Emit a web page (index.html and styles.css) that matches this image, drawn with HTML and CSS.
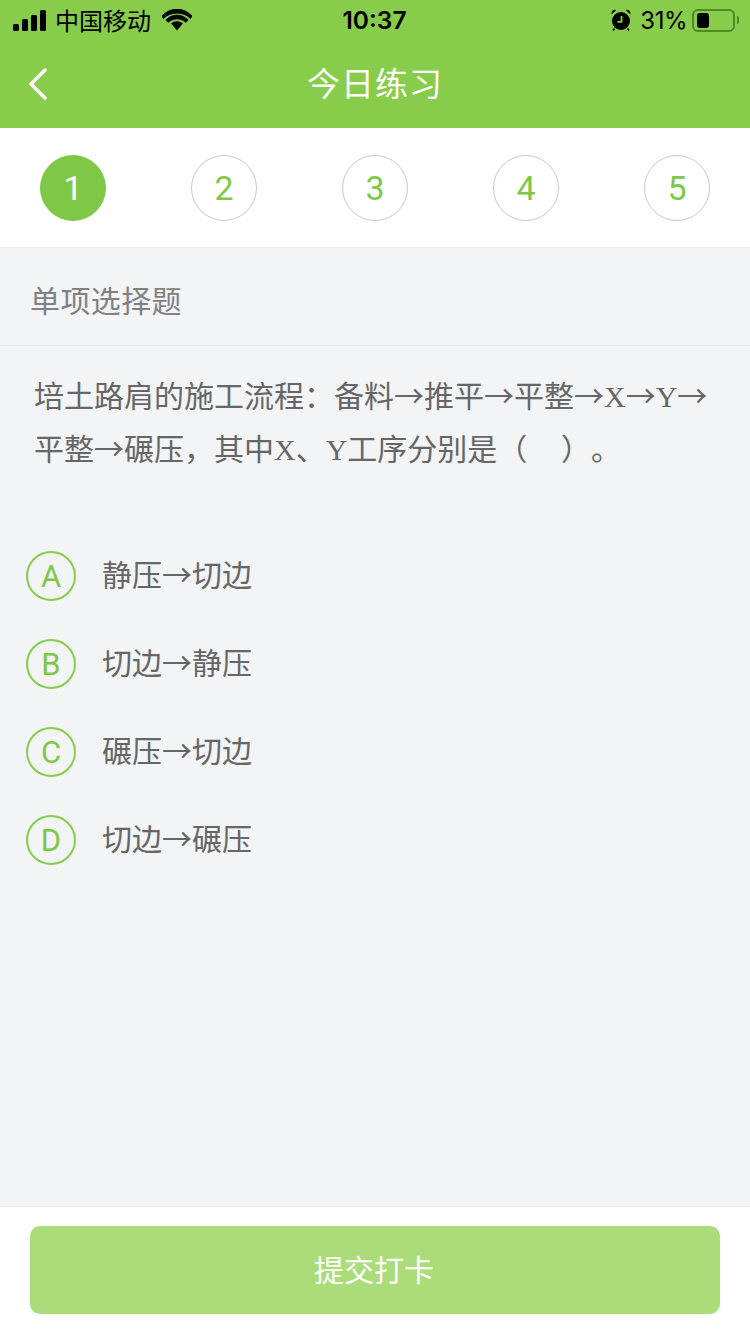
FILE: index.html
```html
<!DOCTYPE html>
<html lang="zh-CN">
<head>
  <meta charset="UTF-8">
  <meta name="viewport" content="width=device-width, initial-scale=1.0">
  <title>今日练习</title>
  <link rel="stylesheet" href="styles.css">
</head>
<body>
  <div class="page">
    <header class="header">
      <!-- Status bar -->
      <div class="status">
        <div class="status-left">
          <svg class="signal" width="34" height="21" viewBox="0 0 34 21">
            <rect x="0" y="14" width="6" height="7" rx="1.5"/>
            <rect x="9" y="9" width="6" height="12" rx="1.5"/>
            <rect x="18" y="5" width="6" height="16" rx="1.5"/>
            <rect x="27" y="0" width="6" height="21" rx="1.5"/>
          </svg>
          <span class="carrier">中国移动</span>
          <svg class="wifi" width="30" height="22" viewBox="0 0 30 22">
            <path d="M15 4c-5.300 0-10 2-13.500 5.400L0 7C4 2.900 9.300.2 15 .2S26 2.900 30 7l-1.500 2.400C25 6 20.300 4 15 4z" stroke="#000" stroke-width="1"/>
            <path d="M15 10c-3.400 0-6.500 1.300-8.900 3.500L3.800 10.800C7 7.900 10.800 6 15 6s8 1.900 11.200 4.800L23.900 13.500C21.500 11.300 18.400 10 15 10z" stroke="#000" stroke-width=".6"/>
            <path d="M15 12.300c-2.300 0-4.300.8-5.900 2.200l5.900 7 5.900-7c-1.600-1.400-3.600-2.200-5.900-2.200z"/>
          </svg>
        </div>
        <div class="time">10:37</div>
        <div class="status-right">
          <svg class="alarm" width="20" height="22" viewBox="0 0 20 22">
            <circle cx="10" cy="12" r="9"/>
            <path d="M.5 5.500 5 1.200C3 0 .3 2 .5 5.500zM19.500 5.500 15 1.200C17 0 19.700 2 19.500 5.500z"/>
            <path d="M3.500 19.500 2 21.500M16.500 19.500l1.500 2" stroke="#000" stroke-width="1.500"/>
            <path d="M10.500 7v5.800H6.500" fill="none" stroke="#88cc4b" stroke-width="1.800"/>
          </svg>
          <span class="percent">31%</span>
          <div class="battery"><div class="battery-level"></div></div>
          <div class="battery-tip"></div>
        </div>
      </div>
      <!-- Nav bar -->
      <nav class="nav">
        <svg class="back" width="20" height="32" viewBox="0 0 20 32">
          <path d="M17 2 3 16l14 14" fill="none" stroke="#fff" stroke-width="3.400" stroke-linecap="round" stroke-linejoin="round"/>
        </svg>
        <h1 class="title">今日练习</h1>
      </nav>
    </header>

    <div class="steps">
      <div class="step active">1</div>
      <div class="step">2</div>
      <div class="step">3</div>
      <div class="step">4</div>
      <div class="step">5</div>
    </div>

    <div class="kind">单项选择题</div>

    <main class="content">
      <p class="question">培土路肩的施工流程：备料→推平→平整→<span class="latin">X</span>→<span class="latin">Y</span>→平整→碾压，其中<span class="latin">X</span>、<span class="latin">Y</span>工序分别是（&nbsp;&nbsp;&nbsp;&nbsp;&nbsp;）。</p>
      <ul class="options">
        <li class="option"><span class="letter">A</span><span class="option-text">静压→切边</span></li>
        <li class="option"><span class="letter">B</span><span class="option-text">切边→静压</span></li>
        <li class="option"><span class="letter">C</span><span class="option-text">碾压→切边</span></li>
        <li class="option"><span class="letter">D</span><span class="option-text">切边→碾压</span></li>
      </ul>
    </main>

    <footer class="footer">
      <button class="submit">提交打卡</button>
    </footer>
  </div>
</body>
</html>
```

FILE: styles.css
```css
* {
  box-sizing: border-box;
}

body {
  margin: 0;
  font-family: "Noto Sans CJK SC", "Liberation Sans", sans-serif;
  background-color: #f2f4f6;
  text-spacing-trim: space-all;
}

.page {
  display: flex;
  flex-direction: column;
  width: 750px;
  height: 1334px;
  overflow: hidden;
}

.header {
  height: 128px;
  background-color: #88cc4b;
}

.status {
  display: flex;
  justify-content: space-between;
  align-items: center;
  height: 40px;
  padding: 0 11px 0 13px;
  color: #000;
}

.status-left,
.status-right {
  display: flex;
  align-items: center;
  width: 260px;
}

.status-right {
  justify-content: flex-end;
}

.carrier {
  margin-left: 8px;
  font-size: 24px;
  line-height: 30px;
}

.wifi {
  margin-left: 11px;
}

.time {
  font-family: Inter, "Liberation Sans", sans-serif;
  font-size: 24.5px;
  font-weight: 600;
  margin-right: 3px;
}

.alarm {
  margin-right: 9px;
}

.percent {
  font-family: Inter, "Liberation Sans", sans-serif;
  font-size: 24px;
  letter-spacing: -0.5px;
  margin-right: 5px;
}

.battery {
  width: 43px;
  height: 23px;
  padding: 2px 3px;
  border: 2px solid #4f8a25;
  border-radius: 6px;
}

.battery-level {
  width: 12px;
  height: 100%;
  background-color: #000;
  border-radius: 3px;
}

.battery-tip {
  width: 2px;
  height: 8px;
  margin-left: 2px;
  background-color: #4f8a25;
  border-radius: 0 2px 2px 0;
}

.nav {
  position: relative;
  display: flex;
  justify-content: center;
  align-items: center;
  height: 88px;
  padding-bottom: 4px;
}

.back {
  position: absolute;
  left: 28px;
  top: 28px;
}

.title {
  margin: 0;
  color: #fff;
  font-size: 33px;
  font-weight: 400;
  letter-spacing: 1px;
}

.steps {
  display: flex;
  justify-content: space-between;
  height: 120px;
  padding: 27px 40px 0;
  background-color: #fff;
  border-bottom: 1px solid #e9ebed;
}

.step {
  display: flex;
  justify-content: center;
  align-items: center;
  width: 66px;
  height: 66px;
  color: #7fc847;
  font-family: Roboto, "Liberation Sans", sans-serif;
  font-size: 34px;
  font-weight: 400;
  border: 1px solid #c9c9c9;
  border-radius: 50%;
}

.step.active {
  color: #fff;
  background-color: #7fc847;
  border-color: #7fc847;
}

.kind {
  height: 98px;
  padding: 0 30px;
  color: #818181;
  font-size: 30px;
  letter-spacing: 0.4px;
  line-height: 103px;
  border-bottom: 1px solid #e9ebed;
}

.content {
  flex: 1;
}

.question {
  margin: 0;
  padding: 22px 34px 0;
  color: #666;
  font-size: 30px;
  line-height: 53px;
}

.latin {
  font-family: "Liberation Serif", serif;
  line-height: 1;
}

.options {
  margin: 0;
  padding: 77px 26px 0;
  list-style: none;
}

.option {
  display: flex;
  align-items: center;
  height: 50px;
  margin-bottom: 38px;
}

.letter {
  display: flex;
  justify-content: center;
  align-items: center;
  width: 50px;
  height: 50px;
  color: #7fc847;
  font-family: Roboto, "Liberation Sans", sans-serif;
  font-size: 31px;
  font-weight: 400;
  border: 2px solid #88cc4b;
  border-radius: 50%;
}

.option-text {
  margin-left: 26px;
  margin-bottom: 7px;
  color: #666;
  font-size: 30px;
  line-height: 50px;
}

.footer {
  height: 128px;
  padding: 19px 30px 0;
  background-color: #fff;
  border-top: 1px solid #e9ebed;
}

.submit {
  display: block;
  width: 100%;
  height: 88px;
  padding: 0 2px 5px 0;
  color: #fff;
  font-family: "Noto Sans CJK SC", sans-serif;
  font-size: 30px;
  background-color: #aadc79;
  border: none;
  border-radius: 10px;
}
```
